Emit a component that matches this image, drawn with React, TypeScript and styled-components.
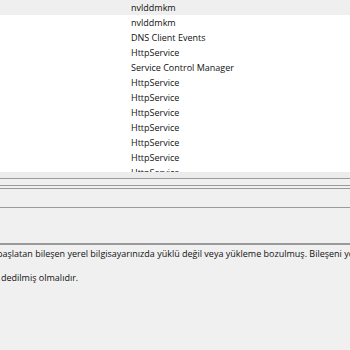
import React from "react";
import styled, { createGlobalStyle } from "styled-components";

const GlobalStyle = createGlobalStyle`
  html, body { margin: 0; padding: 0; background: #f0f0f0; overflow: hidden; }
  * { box-sizing: border-box; }
`;

const FONT = `"Open Sans", "Noto Sans", "DejaVu Sans", sans-serif`;

const Window = styled.div`
  width: 350px;
  height: 350px;
  display: flex;
  flex-direction: column;
  overflow: hidden;
  background: #f0f0f0;
  font-family: ${FONT};
  font-size: 9px;
  color: #111111;
`;

const ListPane = styled.div`
  height: 172px;
  flex: none;
  background: #ffffff;
  overflow: hidden;
  display: flex;
  flex-direction: column;
`;

const Row = styled.div<{ $selected?: boolean }>`
  height: 15px;
  flex: none;
  display: flex;
  align-items: center;
  padding-left: 131px;
  white-space: nowrap;
  background: ${(p) => (p.$selected ? "#efefef" : "transparent")};
`;

const Band = styled.div<{ $h: number; $line?: number; $bg?: string }>`
  height: ${(p) => p.$h + (p.$line ?? 1)}px;
  flex: none;
  background: ${(p) => p.$bg ?? "#f0f0f0"};
  border-bottom: ${(p) => p.$line ?? 1}px solid #9a9a9a;
`;

const TextBox = styled.div`
  flex: 1;
  overflow: hidden;
  padding-top: 3px;
  line-height: 12px;
  white-space: nowrap;
`;

const Line = styled.div<{ $indent?: number }>`
  height: 12px;
  margin-left: ${(p) => p.$indent ?? 0}px;
`;

const rows = [
  "nvlddmkm",
  "nvlddmkm",
  "DNS Client Events",
  "HttpService",
  "Service Control Manager",
  "HttpService",
  "HttpService",
  "HttpService",
  "HttpService",
  "HttpService",
  "HttpService",
  "HttpService",
];

export default function App() {
  return (
    <>
      <GlobalStyle />
      <Window>
        <ListPane>
          {rows.map((r, i) => (
            <Row key={i} $selected={i === 0}>
              {r}
            </Row>
          ))}
        </ListPane>
        <Band $h={6} $bg="#ececec" />
        <Band $h={6} />
        <Band $h={2} />
        <Band $h={18} />
        <Band $h={35} $line={2} />
        <TextBox>
          <Line $indent={-3}>
            başlatan bileşen yerel bilgisayarınızda yüklü değil veya yükleme bozulmuş. Bileşeni yerel bilgisayara yükleyebilir veya onarabilirsiniz.
          </Line>
          <Line />
          <Line $indent={1}>dedilmiş olmalıdır.</Line>
        </TextBox>
      </Window>
    </>
  );
}
